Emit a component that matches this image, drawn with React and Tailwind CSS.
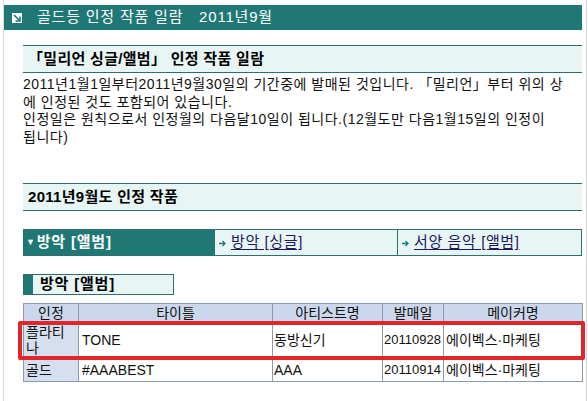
const FONT = "font-['Liberation_Sans','Noto_Sans_CJK_KR',sans-serif]"

const SectionHead = ({ children, className = "" }) => (
  <div className={`ml-[19px] w-[559px] h-[28px] border-y border-[#2e6f6d] bg-[#e8f5f5] flex items-center pl-[5px] text-[15px] font-bold text-black tracking-[0.3px] ${className}`}>
    {children}
  </div>
)

const TabLink = ({ label, className = "" }) => (
  <div className={`flex items-center h-full bg-[#e8f5f5] border-l border-[#2e6f6d] ${className}`}>
    <svg width="7" height="7" viewBox="0 0 7 7" className="ml-[4px] mr-[5px] mt-[1px]">
      <path d="M0 3.5 H6 M3.5 1 L6 3.5 L3.5 6" stroke="#1f7a78" strokeWidth="1.3" fill="none" />
    </svg>
    <span className="text-[15px] text-[#1a1a5e] underline underline-offset-2 tracking-[0.6px]">{label}</span>
  </div>
)

const rows = [
  { rank: "플라티나", title: "TONE", artist: "동방신기", date: "20110928", maker: "에이벡스·마케팅", h: "h-[35px]" },
  { rank: "골드", title: "#AAABEST", artist: "AAA", date: "20110914", maker: "에이벡스·마케팅", h: "h-[24px]" },
]

export default function App() {
  return (
    <div className={`relative w-[588px] h-[401px] bg-white overflow-hidden pl-[3px] ${FONT}`}>
      <div className="w-[584px] h-full border-x border-[#d8d8d8] pt-[5px]">
        {/* title bar */}
        <div className="w-[578px] h-[25px] bg-[#1f7876] flex items-center">
          <svg width="10" height="10" viewBox="0 0 10 10" className="ml-[8px] mr-[15px]">
            <rect width="10" height="10" fill="#fff" />
            <path d="M2 2 L7.5 7.5" stroke="#1f7876" strokeWidth="1.6" />
            <path d="M8 3.5 V8 H3.5" stroke="#1f7876" strokeWidth="1.6" fill="none" />
          </svg>
          <span className="text-white text-[15px] tracking-[0.8px] whitespace-nowrap">골드등 인정 작품 일람　2011년9월</span>
        </div>

        <SectionHead className="mt-[15px]">「밀리언 싱글/앨범」 인정 작품 일람</SectionHead>

        <div className="ml-[19px] mt-[3px] text-[14px] leading-[17.5px] text-[#111] whitespace-nowrap tracking-[0.5px]">
          <div>2011년1월1일부터2011년9월30일의 기간중에 발매된 것입니다. 「밀리언」부터 위의 상</div>
          <div>에 인정된 것도 포함되어 있습니다.</div>
          <div>인정일은 원칙으로서 인정월의 다음달10일이 됩니다.(12월도만 다음1월15일의 인정이</div>
          <div>됩니다)</div>
        </div>

        <SectionHead className="mt-[37px]">2011년9월도 인정 작품</SectionHead>

        {/* tabs */}
        <div className="ml-[19px] mt-[18px] w-[559px] h-[27px] border border-[#2e6f6d] flex">
          <div className="w-[190px] h-full bg-[#1f7876] flex items-center text-white font-bold text-[15px] tracking-[0.8px]">
            <span className="text-[9px] ml-[2px] mr-[1px]">▼</span>방악 [앨범]
          </div>
          <TabLink label="방악 [싱글]" className="w-[183px]" />
          <TabLink label="서양 음악 [앨범]" className="flex-1" />
        </div>

        {/* sub head */}
        <div className="ml-[19px] mt-[18px] w-[151px] h-[21px] border border-[#2e6f6d] bg-[#e8f5f5] flex items-center">
          <div className="w-[9px] h-full bg-[#1f7876]" />
          <span className="ml-[7px] text-[15px] font-bold text-black tracking-[0.8px]">방악 [앨범]</span>
        </div>

        {/* table */}
        <table className="ml-[19px] mt-[8px] border-collapse table-fixed text-[14px] text-[#111] leading-[16px]">
          <colgroup>
            <col className="w-[55px]" />
            <col className="w-[194px]" />
            <col className="w-[110px]" />
            <col className="w-[61px]" />
            <col className="w-[139px]" />
          </colgroup>
          <thead>
            <tr className="h-[19px] bg-[#cbd7ec]">
              {["인정", "타이틀", "아티스트명", "발매일", "메이커명"].map((h) => (
                <th key={h} className="border border-[#8d9aa8] font-normal text-center p-0">{h}</th>
              ))}
            </tr>
          </thead>
          <tbody>
            {rows.map((r) => (
              <tr key={r.title} className={r.h}>
                <td className="border border-[#8d9aa8] bg-[#d5dff0] px-[2px] py-0 break-all">{r.rank}</td>
                <td className="border border-[#8d9aa8] px-[3px] py-0">{r.title}</td>
                <td className="border border-[#8d9aa8] px-[1px] py-0">{r.artist}</td>
                <td className="border border-[#8d9aa8] px-[1px] py-0 text-[13px] whitespace-nowrap">{r.date}</td>
                <td className="border border-[#8d9aa8] px-[2px] py-0 whitespace-nowrap">{r.maker}</td>
              </tr>
            ))}
          </tbody>
        </table>
      </div>

      {/* red highlight annotation */}
      <div className="absolute left-[18px] top-[321px] w-[567px] h-[39px] border-4 border-[#e0262b] rounded-[2px]" />
    </div>
  )
}
